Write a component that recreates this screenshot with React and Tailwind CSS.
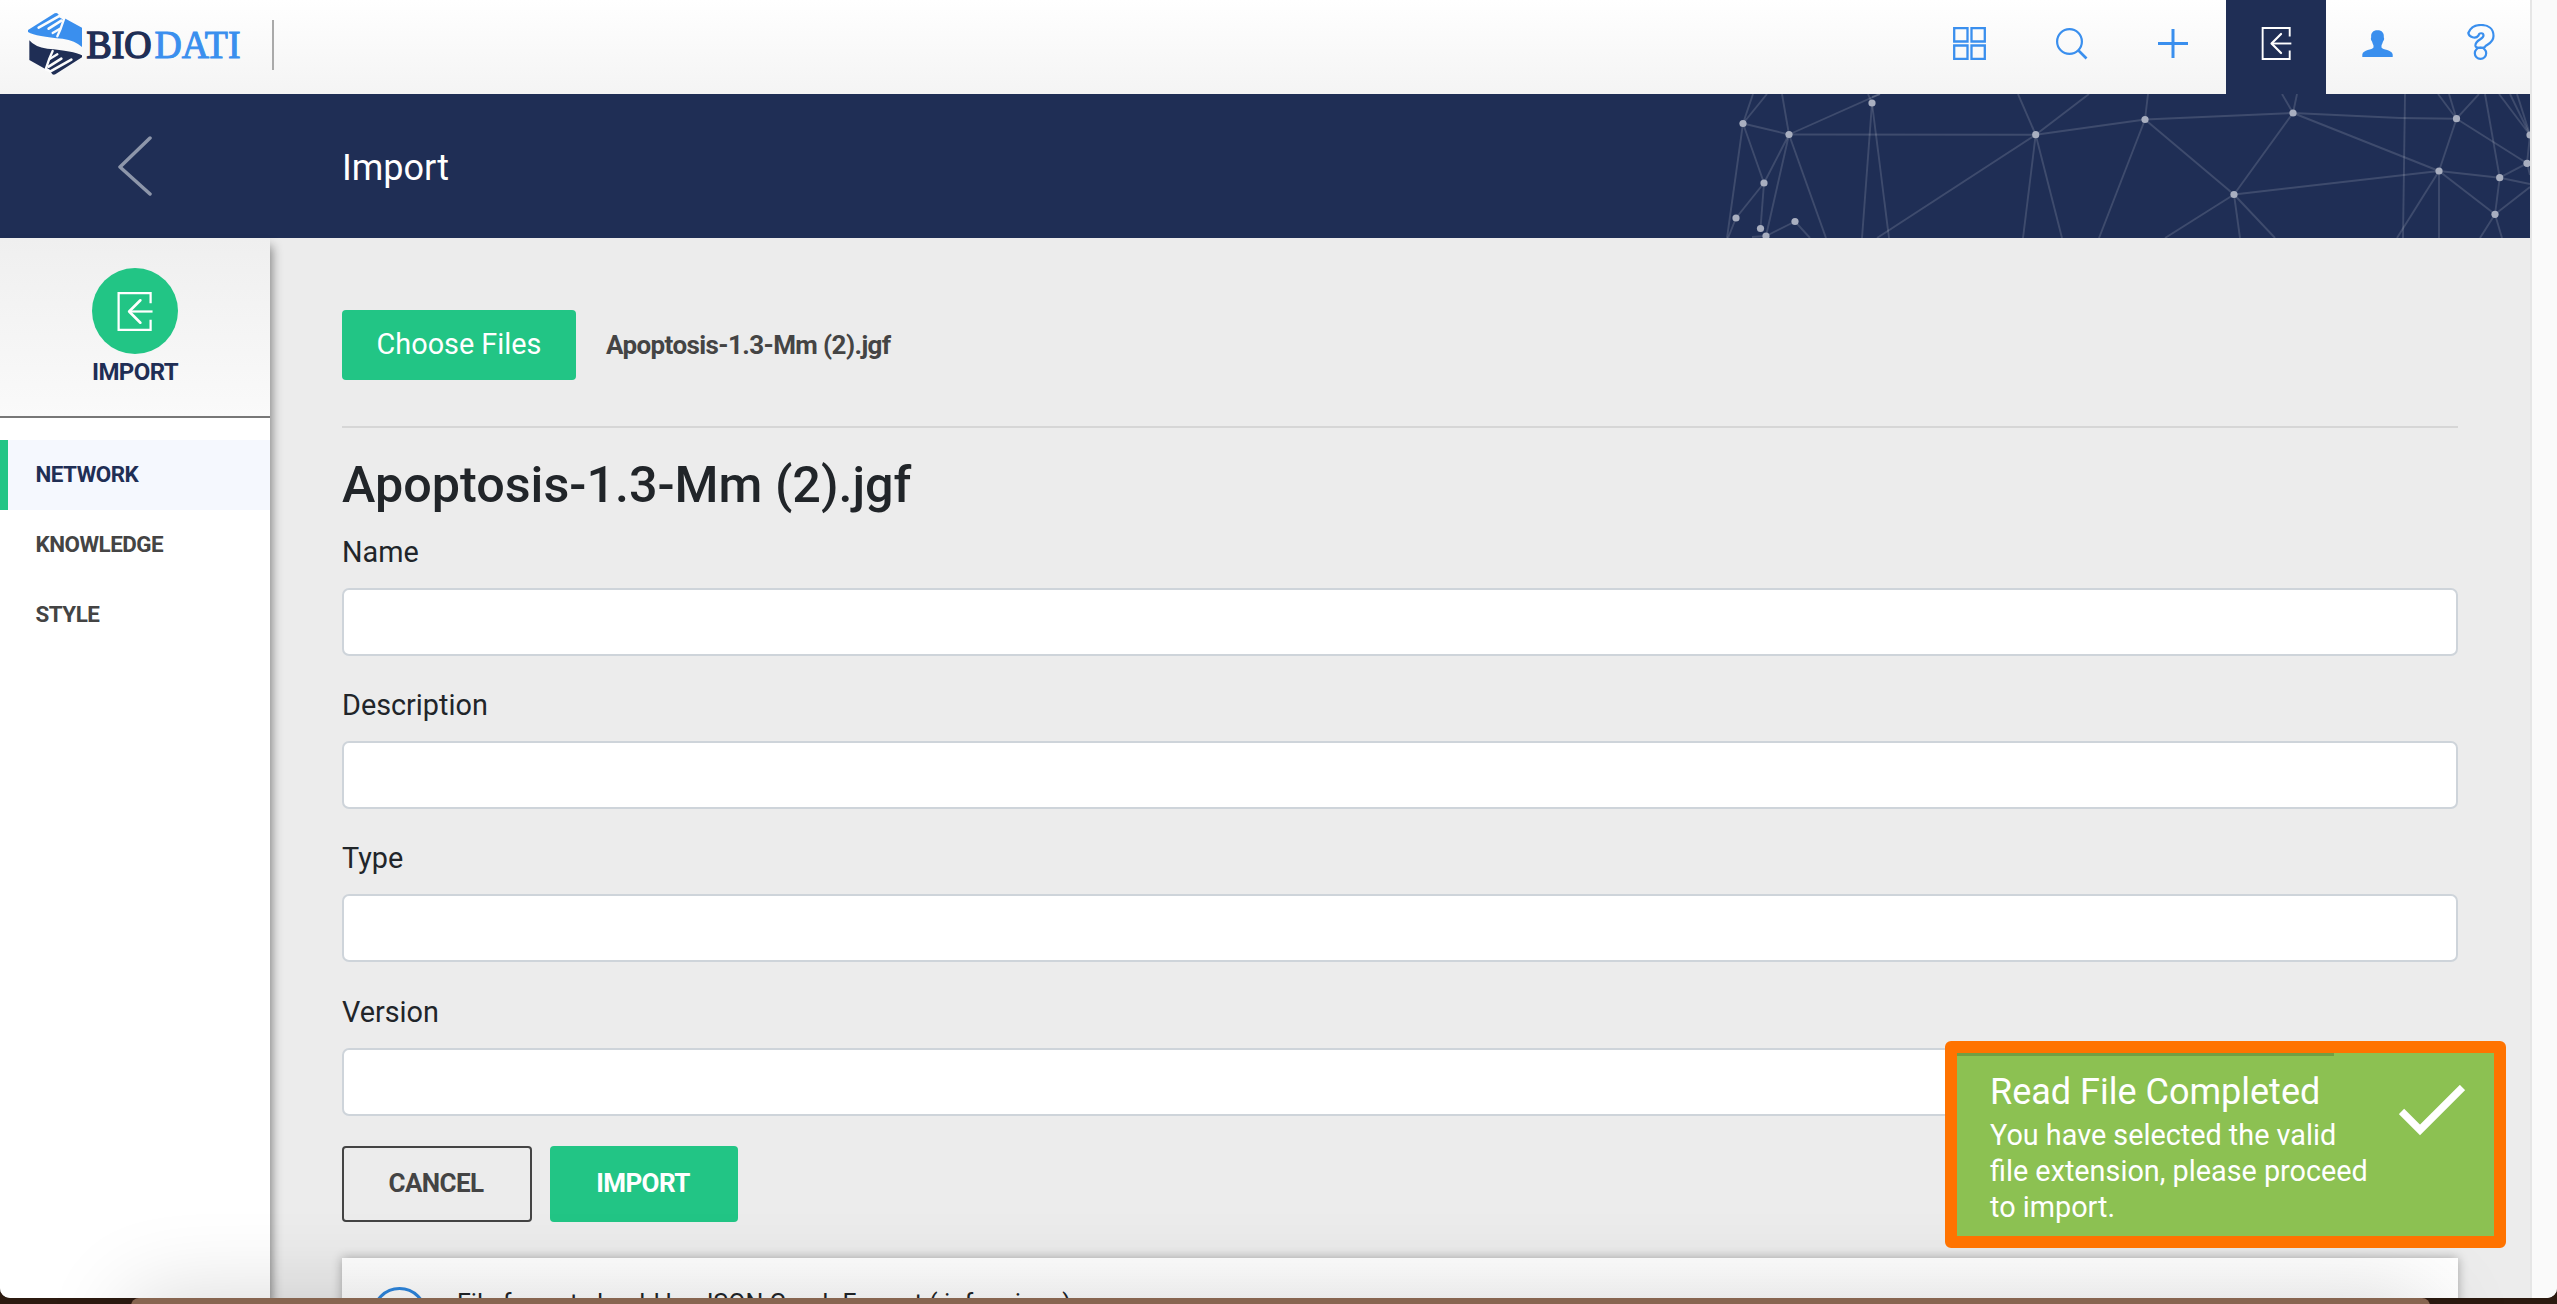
import React from "react";

const nodes = [
  [1743, 123.5], [1789, 134.5], [1764, 183], [1736, 218], [1760.5, 228.5], [1766, 236], [1795, 221.5],
  [1872, 103], [2035.7, 134.7], [2145, 119.5], [2293, 113], [2234, 194.5], [2439, 171], [2456.5, 118.7],
  [2499.7, 177.7], [2527, 163.3], [2530, 135], [2495, 214.3],
];

const lines = [
  [1753, 94, 1743, 123.5], [1767, 94, 1743, 123.5], [1743, 123.5, 1789, 134.5], [1743, 123.5, 1764, 183],
  [1743, 123.5, 1727, 238], [1782, 94, 1789, 134.5], [1789, 134.5, 1880, 94], [1789, 134.5, 2035.7, 134.7],
  [1789, 134.5, 1764, 183], [1789, 134.5, 1766, 236], [1789, 134.5, 1826, 238], [1764, 183, 1736, 218],
  [1764, 183, 1760.5, 228.5], [1736, 218, 1728, 238], [1752, 237, 1766, 236], [1766, 236, 1795, 221.5],
  [1795, 221.5, 1810, 238], [1868, 94, 1872, 103], [1872, 103, 1862, 238], [1872, 103, 1889, 238],
  [1872, 97, 1880, 94], [2018, 94, 2035.7, 134.7], [2089, 94, 2035.7, 134.7], [2035.7, 134.7, 1877, 238],
  [2035.7, 134.7, 2023, 238], [2035.7, 134.7, 2062, 238], [2035.7, 134.7, 2145, 119.5], [2148, 94, 2145, 119.5],
  [2145, 119.5, 2293, 113], [2145, 119.5, 2234, 194.5], [2145, 119.5, 2099, 238], [2293, 113, 2234, 194.5],
  [2293, 113, 2282, 94], [2293, 113, 2297, 94], [2293, 113, 2439, 171], [2293, 113, 2400, 118],
  [2400, 118, 2456.5, 118.7], [2234, 194.5, 2439, 171], [2234, 194.5, 2165, 238], [2234, 194.5, 2240, 238],
  [2234, 194.5, 2275, 238], [2405, 94, 2403, 238], [2439, 171, 2456.5, 118.7], [2439, 171, 2397, 238],
  [2439, 171, 2439, 238], [2439, 171, 2495, 214.3], [2439, 171, 2499.7, 177.7], [2456.5, 118.7, 2438, 94],
  [2456.5, 118.7, 2449, 94], [2456.5, 118.7, 2479, 94], [2456.5, 118.7, 2527, 163.3], [2485, 94, 2499.7, 177.7],
  [2499.7, 177.7, 2527, 163.3], [2499.7, 177.7, 2530, 184], [2499.7, 177.7, 2495, 214.3],
  [2495, 214.3, 2530, 187], [2495, 214.3, 2480, 238], [2495, 214.3, 2502, 238], [2499, 94, 2530, 135],
  [2510, 94, 2530, 135], [2517, 94, 2530, 135], [2530, 135, 2527, 163.3], [2527, 163.3, 2530, 175],
];

function NetworkArt() {
  return (
    <svg className="h-[144px] w-[830px]" viewBox="1700 94 830 144">
      {lines.map(([x1, y1, x2, y2], i) => (
        <line key={i} x1={x1} y1={y1} x2={x2} y2={y2} stroke="#fff" strokeOpacity="0.14" strokeWidth="1.9" />
      ))}
      {nodes.map(([cx, cy], i) => (
        <circle key={i} cx={cx} cy={cy} r="3.6" fill="#a9afc0" />
      ))}
    </svg>
  );
}

function ImportIcon({ className }) {
  return (
    <svg className={className} viewBox="0 0 36 40" fill="none" stroke="currentColor" strokeWidth="2.3">
      <path d="M34 11.500V1.200H1.200v37.600H34V28.500" />
      <path d="M36 20H12" />
      <path d="M23.500 8.500L12 20l11.500 11.500" strokeWidth="2.700" strokeLinecap="round" strokeLinejoin="round" />
    </svg>
  );
}

function Logo() {
  return (
    <svg className="h-16 w-[222px]" viewBox="26 11 222 64">
      <g transform="scale(0.33333)">
        <path fill="#3a8fee" d="M84 90L164 40Q172 36 176 44L198 57L246 83V141Q226 122 188 116Q110 110 84 96Z" />
        <path fill="#1f2e55" d="M246 172L166 223Q158 227 154 218L132 205L88 180V121Q104 141 142 146Q220 152 246 166Z" />
        <g fill="#fcfcfc" stroke="#fcfcfc" strokeWidth="8" strokeLinecap="round" strokeLinejoin="round">
          <path d="M116 83L180 47" />
          <path d="M146 86L184 62" />
          <path d="M158 99L180 86" strokeWidth="7" />
          <path d="M193 54L182 86L172 109" strokeWidth="7" />
          <path d="M190 54L180 48" />
          <path d="M214 179L150 215" />
          <path d="M184 176L146 200" />
          <path d="M172 163L150 176" strokeWidth="7" />
          <path d="M137 208L148 176L158 153" strokeWidth="7" />
          <path d="M140 208L150 214" />
        </g>
      </g>
      <text x="86.500" y="57.500" fontFamily="Liberation Serif, serif" fontSize="40" fill="#1f2e55" stroke="#1f2e55" strokeWidth="1.700" textLength="65" lengthAdjust="spacingAndGlyphs">BIO</text>
      <text x="154.500" y="57.500" fontFamily="Liberation Serif, serif" fontSize="40" fill="#3a8fee" stroke="#3a8fee" strokeWidth="1.100" textLength="86" lengthAdjust="spacingAndGlyphs">DATI</text>
    </svg>
  );
}

function TopBar() {
  return (
    <header className="flex h-[94px] items-center bg-linear-to-b from-white to-[#f4f4f4] pl-[26px]">
      <div className="flex h-full items-start pt-[11px]"><Logo /></div>
      <div className="mb-1 ml-6 h-[50px] w-[2px] bg-[#aaa]" />
      <nav className="ml-auto flex h-full text-[#3a8fee]">
        <div className="flex w-[103px] justify-center pr-px pt-[27px]">
          <svg className="h-[33px] w-[33px]" viewBox="0 0 33 33" fill="none" stroke="currentColor" strokeWidth="2.300">
            <path d="M1.200 1.200h13.300v13.300H1.200zM18.500 1.200h13.300v13.300H18.500zM1.200 18.500h13.300v13.300H1.200zM18.500 18.500h13.300v13.300H18.500z" />
          </svg>
        </div>
        <div className="flex w-[102px] justify-center pt-[28px]">
          <svg className="h-8 w-8" viewBox="0 0 32 32" fill="none" stroke="currentColor" strokeWidth="2.200">
            <circle cx="13.500" cy="13.500" r="12.400" />
            <path d="M22 22l8.500 8.500" strokeWidth="2.600" />
          </svg>
        </div>
        <div className="flex w-[103px] justify-center pr-[3px] pt-[29px]">
          <svg className="h-[29px] w-[30px]" viewBox="0 0 30 29" stroke="currentColor" strokeWidth="3">
            <path d="M15 0v29M0 14.500h30" />
          </svg>
        </div>
        <div className="flex w-[100px] justify-center bg-[#1f2e55] pt-[27px] text-white">
          <ImportIcon className="h-[33px] w-[31px]" />
        </div>
        <div className="flex w-[102px] justify-center pt-[30px]">
          <svg className="h-[27px] w-[31px]" viewBox="0 0 31 27" fill="currentColor">
            <path d="M15.500 0.300C20 0.300 22.300 3 21.800 7.300C22.500 8.500 22 10.500 21 11.500C20.500 13.500 19.700 14.500 19.500 15.500V17.500C20.500 20 30 19.500 30.700 24.500V27H0.300V24.500C1 19.500 10.500 20 11.500 17.500V15.500C11.300 14.500 10.500 13.500 10 11.500C9 10.500 8.500 8.500 9.200 7.300C8.700 3 11 0.300 15.500 0.300Z" />
          </svg>
        </div>
        <div className="flex w-[102px] justify-center pl-[3px] pt-6">
          <svg className="h-9 w-7" viewBox="0 0 28 36" fill="none" stroke="currentColor" strokeWidth="2.200">
            <path d="M1.300 9C3.500 3.500 8 1 14 1C21.500 1 26.500 5 26.500 12C26.500 18.500 21 20 18.500 22C18 24.500 9 24.500 8.500 22C7.500 16 16.500 15.500 16.500 11.500C16.500 8.500 12 8.500 11.500 11.500C8.500 15.500 2 13 1.300 9Z" />
            <circle cx="13.500" cy="29.200" r="5.700" />
          </svg>
        </div>
      </nav>
    </header>
  );
}

function Banner() {
  return (
    <div className="flex h-[144px] items-center bg-[#1f2e55]">
      <div className="flex w-[270px] justify-center">
        <svg className="mb-[9px] mt-2 h-[60px] w-[34px]" viewBox="0 0 34 60" fill="none" stroke="#8d96aa" strokeWidth="3.500" strokeLinecap="round" strokeLinejoin="round">
          <path d="M32 2L2 31l30 27" />
        </svg>
      </div>
      <h1 className="ml-[72px] mt-1 text-[36px] text-white">Import</h1>
      <div className="ml-auto"><NetworkArt /></div>
    </div>
  );
}

function Sidebar() {
  return (
    <aside className="z-10 w-[270px] shrink-0 bg-white shadow-[2px_8px_10px_rgba(0,0,0,0.45)]">
      <div className="flex h-[180px] flex-col items-center border-b-2 border-[#777] bg-linear-to-b from-[#efefef] to-[#fafafa] pt-[30px] text-[#1f2e55]">
        <div className="flex size-[86px] items-center justify-center rounded-full bg-[#22c585] text-white">
          <ImportIcon className="h-[39px] w-[36px]" />
        </div>
        <div className="mt-[2px] text-[24px] font-bold leading-[32px] tracking-[-0.6px]">IMPORT</div>
      </div>
      <ul className="mt-[22px] text-[22.400px] font-bold leading-[69px] tracking-[-0.5px] text-[#444]">
        <li className="h-[70px] border-l-8 border-[#22c585] bg-[#f5f8fe] pl-[27.500px] text-[#1f2e55]">NETWORK</li>
        <li className="h-[70px] pl-[35.500px]">KNOWLEDGE</li>
        <li className="h-[70px] pl-[35.500px]">STYLE</li>
      </ul>
    </aside>
  );
}

function Field({ label }) {
  return (
    <label className="block h-[153.300px]">
      <span className="block h-[64px] pt-[7px] text-[28.800px] leading-[42px]">{label}</span>
      <span className="block h-[68px] rounded-[7px] border-2 border-[#ced4da] bg-white" />
    </label>
  );
}

function ImportForm() {
  return (
    <main className="flex-1 pl-[72px] pr-[72px] pt-[72px] text-[#212529]">
      <div className="flex h-[118px] border-b-2 border-[#d6d6d6]">
        <button className="h-[70px] w-[234px] rounded bg-[#22c585] text-[28.800px] text-white">Choose Files</button>
        <span className="ml-[30px] text-[26px] font-bold leading-[71px] tracking-[-0.6px] text-[#444]">Apoptosis-1.3-Mm (2).jgf</span>
      </div>
      <h2 className="h-[95.700px] pt-[28px] text-[50.300px] font-medium leading-[58px]">Apoptosis-1.3-Mm (2).jgf</h2>
      <Field label="Name" />
      <Field label="Description" />
      <Field label="Type" />
      <Field label="Version" />
      <div className="mt-[9px] flex h-[76px] gap-[18px] text-[26px] font-bold tracking-[-0.6px]">
        <button className="w-[190px] rounded border-2 border-[#444] pr-[2px] text-[#444]">CANCEL</button>
        <button className="w-[188px] rounded bg-[#22c585] pr-[2px] text-white">IMPORT</button>
      </div>
      <div className="mt-9 flex h-[140px] bg-linear-to-b from-white to-[#fdfdfd] pl-[30px] pt-[29px] shadow-[0_0_10px_rgba(0,0,0,0.3)]">
        <div className="size-[55px] rounded-full border-[3.500px] border-[#2e86de]" />
        <p className="ml-[30px] text-[25px] leading-[34px] tracking-[0.05px]">File format should be JSON Graph Format (.jgf or .json)</p>
      </div>
    </main>
  );
}

function Toast() {
  return (
    <div className="absolute left-[1945px] top-[1041px] z-20 flex h-[207px] w-[561px] rounded-[6px] border-12 border-[#ff7300] bg-[#8cc152] text-white">
      <div className="absolute left-0 top-0 h-[3px] w-[377px] bg-[#719f44]" />
      <div className="w-[400px] pl-[33px] pt-[16px]">
        <div className="text-[36px] leading-[46px]">Read File Completed</div>
        <div className="mt-[2px] whitespace-nowrap text-[28.800px] leading-9">You have selected the valid<br />file extension, please proceed<br />to import.</div>
      </div>
      <svg className="ml-[42px] mt-[32px] h-[51px] w-[66px]" viewBox="0 0 66 51" fill="none" stroke="#fff" strokeWidth="7.500">
        <path d="M2.500 26.500L21 45L63.500 2.500" />
      </svg>
    </div>
  );
}

export default function App() {
  return (
    <div className="relative h-[1304px] w-[2557px] overflow-hidden bg-[#2c1a10] font-['Roboto',sans-serif]">
      <div className="flex h-[1298px] overflow-hidden rounded-b-[10px] bg-[#ececec]">
        <div className="flex w-[2530px] flex-col">
          <TopBar />
          <Banner />
          <div className="flex h-[1060px]">
            <Sidebar />
            <ImportForm />
          </div>
        </div>
        <div className="w-[27px] border-l-2 border-[#e6e6e6] bg-[#fafafa]" />
      </div>
      <Toast />
      <div className="relative z-10 ml-[131px] h-[120px] w-[2299px] rounded-t-[8px] bg-[#876550] shadow-[0_0_90px_rgba(0,0,0,0.16)]" />
    </div>
  );
}
